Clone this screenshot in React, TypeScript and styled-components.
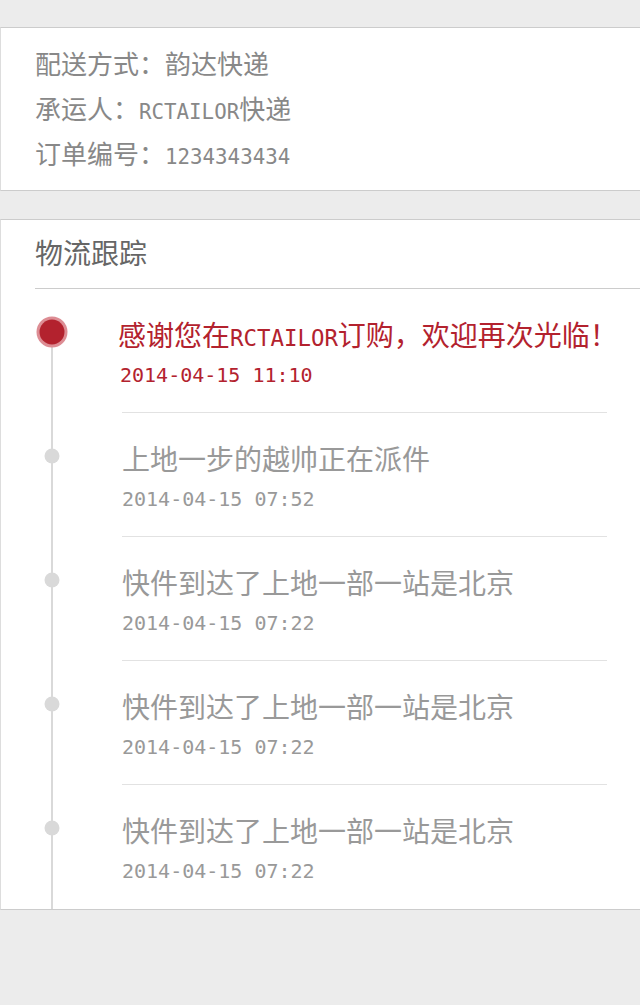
import { FC } from 'react';
import styled, { createGlobalStyle } from 'styled-components';

// latin runs are set in a half-width mono face, like the reference
const steps = [
	{ title: ['感谢您在', 'RCTAILOR', '订购，欢迎再次光临！'], time: '2014-04-15 11:10', active: true },
	{ title: ['上地一步的越帅正在派件'], time: '2014-04-15 07:52', active: false },
	{ title: ['快件到达了上地一部一站是北京'], time: '2014-04-15 07:22', active: false },
	{ title: ['快件到达了上地一部一站是北京'], time: '2014-04-15 07:22', active: false },
	{ title: ['快件到达了上地一部一站是北京'], time: '2014-04-15 07:22', active: false },
];

const App: FC = () => (
	<Page>
		<GlobalStyle />
		<Card>
			<Info>
				<InfoLine>配送方式：韵达快递</InfoLine>
				<InfoLine>
					承运人：<Latin>RCTAILOR</Latin>快递
				</InfoLine>
				<InfoLine>
					订单编号：<Latin>1234343434</Latin>
				</InfoLine>
			</Info>
		</Card>
		<Card>
			<Header>物流跟踪</Header>
			<Timeline>
				{steps.map((step, index) => (
					<Step key={index}>
						<Rail $first={index === 0}>
							<Dot $active={step.active} />
						</Rail>
						<StepBody $last={index === steps.length - 1}>
							<Title $active={step.active}>
								{step.title.map((part, i) => (i % 2 === 1 ? <Latin key={i}>{part}</Latin> : part))}
							</Title>
							<Time $active={step.active}>{step.time}</Time>
						</StepBody>
					</Step>
				))}
			</Timeline>
		</Card>
	</Page>
);

export default App;

const GlobalStyle = createGlobalStyle`
	html, body {
		margin: 0;
		padding: 0;
		background: #ececec;
	}
	body {
		font-family: "Noto Sans CJK SC", "Noto Sans", sans-serif;
	}
`;

const Page = styled.div`
	min-height: 1005px;
	box-sizing: border-box;
	padding-top: 27px;
`;

const Card = styled.section`
	background: #fff;
	border-top: 1px solid #cccccc;
	border-bottom: 1px solid #cccccc;
	border-left: 1px solid #dddddd;

	& + & {
		margin-top: 28px;
	}
`;

const Latin = styled.span`
	font-family: "DejaVu Sans Mono", "Liberation Mono", monospace;
	font-size: 0.8em;
	line-height: 1;
`;

const Info = styled.div`
	padding: 12px 0 15px 34px;
`;

const InfoLine = styled.div`
	height: 45px;
	color: #888888;
	font-size: 26px;
	line-height: 45px;
	white-space: nowrap;
`;

const Header = styled.h3`
	margin: 0 0 0 34px;
	padding-bottom: 4px;
	color: #666666;
	font-size: 28px;
	font-weight: 400;
	line-height: 64px;
	border-bottom: 1px solid #cccccc;
`;

const Timeline = styled.div`
	display: flex;
	flex-direction: column;
`;

const Step = styled.div`
	display: flex;
`;

const Rail = styled.div<{ $first: boolean }>`
	position: relative;
	flex: 0 0 103px;

	&::before {
		content: '';
		position: absolute;
		left: 50px;
		top: ${(p) => (p.$first ? '43px' : '0')};
		bottom: 0;
		width: 2px;
		background: #d9d9d9;
	}
`;

const Dot = styled.span<{ $active: boolean }>`
	position: absolute;
	top: 43px;
	left: 51px;
	width: ${(p) => (p.$active ? '25px' : '15px')};
	height: ${(p) => (p.$active ? '25px' : '15px')};
	border-radius: 50%;
	background: ${(p) => (p.$active ? '#b3222e' : '#d9d9d9')};
	box-shadow: ${(p) => (p.$active ? '0 0 0 3px #dd8d94' : 'none')};
	transform: translate(-50%, -50%);
`;

const StepBody = styled.div<{ $last: boolean }>`
	flex: 1;
	min-width: 0;
	margin: 0 33px 0 18px;
	padding: 25px 0 ${(p) => (p.$last ? '17px' : '16px')};
	border-bottom: ${(p) => (p.$last ? 'none' : '1px solid #e2e2e2')};
`;

const Title = styled.div<{ $active: boolean }>`
	height: 40px;
	margin-left: ${(p) => (p.$active ? '-4px' : '0')};
	color: ${(p) => (p.$active ? '#b3222e' : '#999999')};
	font-size: 28px;
	line-height: 40px;
	white-space: nowrap;
`;

const Time = styled.div<{ $active: boolean }>`
	margin-left: ${(p) => (p.$active ? '-2px' : '0')};
	color: ${(p) => (p.$active ? '#b3222e' : '#999999')};
	font-family: "DejaVu Sans Mono", "Liberation Mono", monospace;
	font-size: 20px;
	line-height: 42px;
`;
